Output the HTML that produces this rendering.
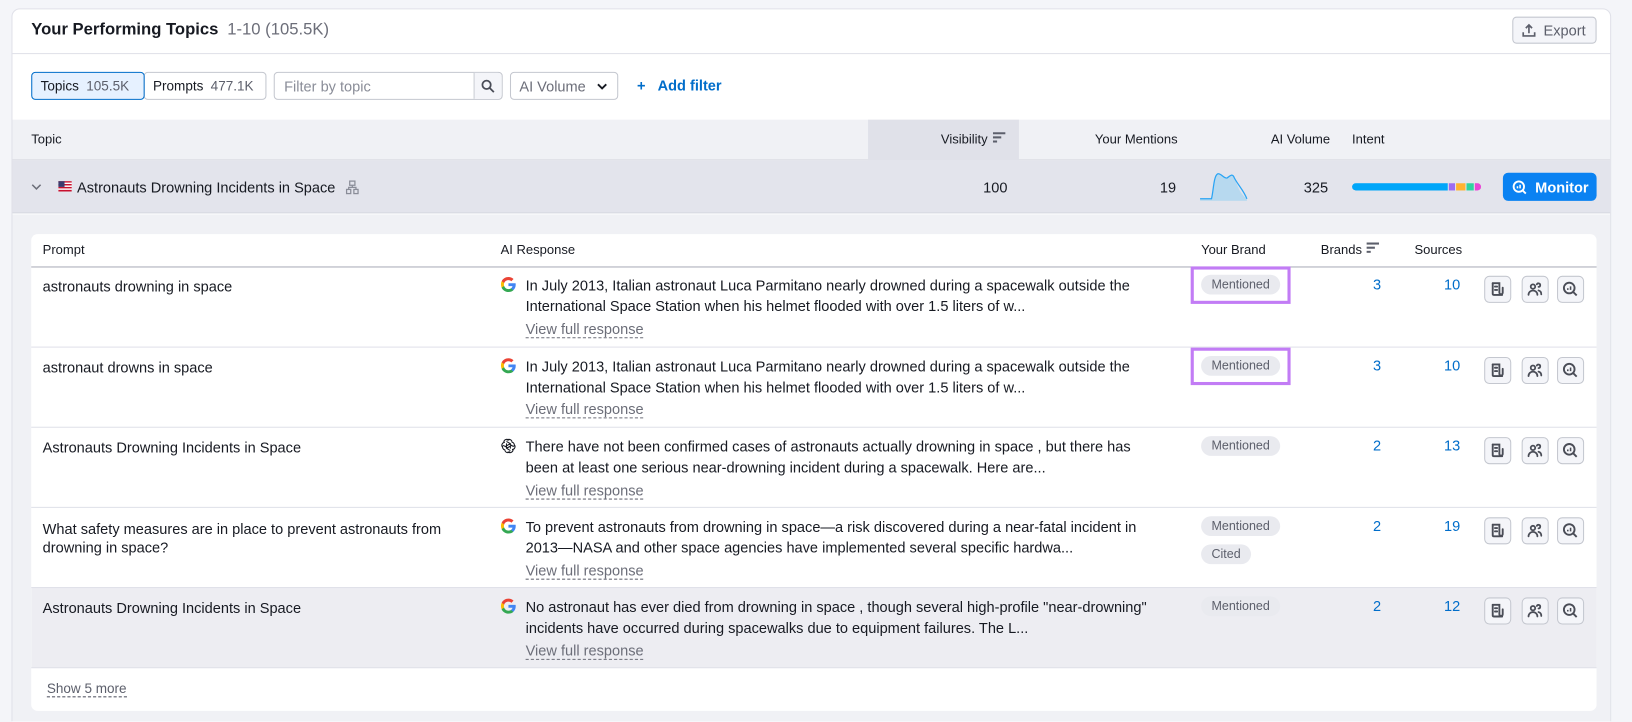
<!DOCTYPE html>
<html><head><meta charset="utf-8"><style>
*{box-sizing:border-box;margin:0;padding:0}
html,body{width:1632px;height:722px;overflow:hidden;background:#f4f5f9;font-family:"Liberation Sans",sans-serif;color:#171a22}
#root{position:absolute;left:0;top:0;width:1568px;height:693px;overflow:hidden;transform:scale(1.0408);transform-origin:0 0}
.a{position:absolute;white-space:nowrap}
.card{position:absolute;left:11px;top:8px;width:1537px;height:700px;background:#fff;border:1px solid #e0e1e9;border-radius:8px;overflow:hidden}
.btn{position:absolute;border:1px solid #c4c7cf;border-radius:4px;background:#fff;font-size:13px;display:flex;align-items:center}
.hdr{font-size:12.5px;color:#171a22}
.txt{font-size:14px}
.resp{font-size:14px;line-height:20px}
.badge{position:absolute;left:1154px;height:19px;line-height:19px;padding:0 10px;background:#e9eaef;border-radius:10px;font-size:12px;color:#5c5f6b}
.hl{position:absolute;left:1144px;width:96px;height:36px;border:3px solid #c27cf5}
.num{position:absolute;font-size:14px;color:#006dca;text-align:right;width:40px}
.ib{position:absolute;width:26px;height:26px;border:1px solid #c4c7cf;border-radius:5px;background:#f4f5f9;display:flex;align-items:center;justify-content:center}
.vfr{position:absolute;left:505px;font-size:14px;color:#6c6e79;border-bottom:1px dashed #6c6e79;line-height:15px}
</style></head><body><div id="root">
<div class="card"></div>
<div class="a" style="left:30px;top:20px;font-size:16px;font-weight:bold">Your Performing Topics <span style="font-weight:normal;color:#6c6e79;margin-left:4px">1-10 (105.5K)</span></div>
<div class="btn" style="left:1453px;top:16px;width:81px;height:26px;background:#f4f5f9;color:#5c5f6b;font-size:14px;padding-left:8px">
<svg width="14" height="14" viewBox="0 0 14 14" fill="none" stroke="#5c5f6b" stroke-width="1.6"><path d="M7 10V2M4 5l3-3 3 3M1.5 9v3.5h11V9"/></svg><span style="margin-left:7px">Export</span></div>
<div class="a" style="left:11px;top:51px;width:1537px;height:1px;background:#e0e1e9"></div>
<div class="btn" style="left:30px;top:69px;width:109px;height:27px;background:#e6f1ff;border-color:#006dca;padding-left:8px;z-index:2">Topics<span style="color:#5c5f6b;margin-left:7px">105.5K</span></div>
<div class="btn" style="left:138px;top:69px;width:118px;height:27px;padding-left:8px">Prompts<span style="color:#5c5f6b;margin-left:7px">477.1K</span></div>
<div class="btn" style="left:263px;top:69px;width:220px;height:27px;padding-left:9px;color:#8a8d98;font-size:14px">Filter by topic</div>
<div class="a" style="left:455px;top:70px;width:27px;height:25px;background:#f4f5f9;border-left:1px solid #c4c7cf;border-radius:0 4px 4px 0;display:flex;align-items:center;justify-content:center"><svg width="14" height="14" viewBox="0 0 14 14" fill="none" stroke="#4a4d57" stroke-width="1.7"><circle cx="5.5" cy="5.5" r="4"/><path d="M8.5 8.5l4 4"/></svg></div>
<div class="btn" style="left:490px;top:69px;width:104px;height:27px;padding-left:8px;color:#6c6e79;font-size:14px">AI Volume<svg style="margin-left:10px" width="11" height="8" viewBox="0 0 11 8" fill="none" stroke="#171a22" stroke-width="1.8"><path d="M1.5 2l4 4 4-4"/></svg></div>
<div class="a" style="left:612px;top:74px;font-size:14px;color:#006dca;font-weight:bold">+&nbsp;&nbsp;&nbsp;Add filter</div>
<div class="a" style="left:12px;top:115px;width:1535px;height:39px;background:#f0f1f5;border-bottom:1px solid #dcdde4"></div>
<div class="a" style="left:834px;top:115px;width:145px;height:39px;background:#e0e1e9"></div>
<div class="a hdr" style="left:30px;top:127px">Topic</div>
<div class="a hdr" style="left:904px;top:127px">Visibility</div>
<svg class="a" style="left:954px;top:127px" width="12" height="10" viewBox="0 0 12 10" fill="#5c5f6b"><rect y="0" width="12" height="2"/><rect y="4" width="8" height="2"/><rect y="8" width="4" height="2"/></svg>
<div class="a hdr" style="left:1052px;top:127px">Your Mentions</div>
<div class="a hdr" style="left:1221px;top:127px">AI Volume</div>
<div class="a hdr" style="left:1299px;top:127px">Intent</div>
<div class="a" style="left:12px;top:154px;width:1535px;height:51px;background:#e3e4ec;border-bottom:1px solid #d6d8e0"></div>
<svg class="a" style="left:30px;top:176px" width="10" height="7" viewBox="0 0 10 7" fill="none" stroke="#6c6e79" stroke-width="1.5"><path d="M1 1.5l4 4 4-4"/></svg>
<svg class="a" style="left:56px;top:174px" width="13" height="10" viewBox="0 0 13 10"><rect width="13" height="10" fill="#fff"/><rect y="0" width="13" height="1.4" fill="#c8102e"/><rect y="2.8" width="13" height="1.4" fill="#c8102e"/><rect y="5.6" width="13" height="1.4" fill="#c8102e"/><rect y="8.4" width="13" height="1.6" fill="#c8102e"/><rect width="6" height="5.6" fill="#3c3b6e"/></svg>
<div class="a txt" style="left:74px;top:172px">Astronauts Drowning Incidents in Space</div>
<svg class="a" style="left:332px;top:173px" width="13" height="14" viewBox="0 0 13 14" fill="none" stroke="#8a8d98" stroke-width="1.2"><rect x="4" y="1" width="5" height="4"/><rect x="1" y="9" width="4" height="4"/><rect x="8" y="9" width="4" height="4"/><path d="M6.5 5v2M3 9V7h7v2"/></svg>
<div class="a txt" style="left:928px;top:172px;width:40px;text-align:right">100</div>
<div class="a txt" style="left:1090px;top:172px;width:40px;text-align:right">19</div>
<svg class="a" style="left:1153px;top:163px" width="46" height="30" viewBox="0 0 46 30"><path d="M0 28H11C13 20 13 6 17 4 20 3 23 9 26 8 29 6 31 3 33 8 36 14 37 22 45 28V30H0Z" fill="#b7d9ef"/><path d="M0 28H11C13 20 13 6 17 4 20 3 23 9 26 8 29 6 31 3 33 8 36 14 42 20 45 28" fill="none" stroke="#2aa4f4" stroke-width="1.2"/></svg>
<div class="a txt" style="left:1236px;top:172px;width:40px;text-align:right">325</div>
<div class="a" style="left:1299px;top:176px;height:7px;width:125px;display:flex;border-radius:4px;overflow:hidden">
<div style="width:92px;background:#00a6f9;border-radius:4px 0 0 4px"></div><div style="width:1px"></div><div style="width:6px;background:#9d6cf2"></div><div style="width:1px"></div><div style="width:9px;background:#ffb331"></div><div style="width:1px"></div><div style="width:7px;background:#2fd39f"></div><div style="width:1px"></div><div style="width:6px;background:#e847d5;border-radius:0 4px 4px 0"></div></div>
<div class="a" style="left:1444px;top:166px;width:90px;height:27px;background:#0a82f2;border-radius:5px;color:#fff;font-size:14px;font-weight:bold;display:flex;align-items:center;padding-left:9px">
<svg width="14" height="14" viewBox="0 0 14 14" fill="none" stroke="#fff" stroke-width="1.8"><circle cx="6.3" cy="6.3" r="5"/><path d="M10 10l3 3"/><path d="M5 8V6M7.5 8V4.5" stroke-width="1.5"/></svg><span style="margin-left:8px">Monitor</span></div>
<div class="a" style="left:12px;top:206px;width:1535px;height:487px;background:#f0f1f5"></div>
<div class="a" style="left:30px;top:225px;width:1504px;height:458px;background:#fff;border-radius:6px;overflow:hidden">
<div class="a" style="left:0;top:340px;width:1504px;height:77px;background:#ededf2"></div>
</div>
<div class="a" style="left:30px;top:256px;width:1504px;height:1px;background:#a9acb8"></div>
<div class="a" style="left:30px;top:333px;width:1504px;height:1px;background:#e0e1e9"></div>
<div class="a" style="left:30px;top:410px;width:1504px;height:1px;background:#e0e1e9"></div>
<div class="a" style="left:30px;top:487px;width:1504px;height:1px;background:#e0e1e9"></div>
<div class="a" style="left:30px;top:564px;width:1504px;height:1px;background:#e0e1e9"></div>
<div class="a" style="left:30px;top:641px;width:1504px;height:1px;background:#e0e1e9"></div>
<div class="a hdr" style="left:41px;top:233px">Prompt</div>
<div class="a hdr" style="left:481px;top:233px">AI Response</div>
<div class="a hdr" style="left:1154px;top:233px">Your Brand</div>
<div class="a hdr" style="left:1269px;top:233px">Brands</div>
<svg class="a" style="left:1313px;top:233px" width="12" height="10" viewBox="0 0 12 10" fill="#5c5f6b"><rect width="12" height="2"/><rect y="4" width="8" height="2"/><rect y="8" width="4" height="2"/></svg>
<div class="a hdr" style="left:1359px;top:233px">Sources</div>
<div class="a" style="left:45px;top:655px;font-size:13px;color:#5c5f6b;border-bottom:1px dashed #5c5f6b;line-height:14px">Show 5 more</div>

<svg width="0" height="0" style="position:absolute"><defs>
<g id="gg"><path d="M14.5 7.6c0-.5 0-1-.1-1.4H7.5v2.7h3.9c-.2.9-.7 1.6-1.4 2.1v1.8h2.3c1.4-1.3 2.2-3.1 2.2-5.2z" fill="#4285f4"/><path d="M7.5 14.6c1.9 0 3.6-.6 4.8-1.7L10 11.1c-.6.4-1.5.7-2.5.7-1.9 0-3.5-1.3-4.1-3H1v1.8c1.2 2.4 3.7 4 6.5 4z" fill="#34a853"/><path d="M3.4 8.7c-.3-.9-.3-1.9 0-2.8V4.1H1c-.9 1.9-.9 4.2 0 6.3z" fill="#fbbc05"/><path d="M7.5 3.1c1.1 0 2 .4 2.8 1.1l2.1-2.1C11.1.9 9.4.2 7.5.2 4.7.2 2.2 1.8 1 4.1l2.4 1.8c.6-1.7 2.2-2.8 4.1-2.8z" fill="#ea4335"/></g>
<g id="i1" fill="none" stroke="#4a4d57" stroke-width="1.7" stroke-linecap="round"><path d="M3 2h6v8.5a1.5 1.5 0 0 0 3 0V6"/><path d="M3 2v9.5a1 1 0 0 0 1 1h7.5"/><path d="M5 5h2M5 8h2"/></g>
<g id="i2" fill="none" stroke="#4a4d57" stroke-width="1.6" stroke-linecap="round"><circle cx="5.5" cy="5" r="2"/><path d="M1.5 12.5c0-2.5 2-4 4-4s4 1.5 4 4"/><path d="M9 3a1.6 1.6 0 1 1 1.5 2.3M10.5 8.5c1.5.4 2.5 1.8 2.5 3.5"/></g>
<g id="i3" fill="none" stroke="#4a4d57" stroke-width="1.7"><circle cx="6.3" cy="6.3" r="4.8"/><path d="M10 10l3 3"/><path d="M5 8V6.5M7.5 8V4.8" stroke-width="1.4"/></g>
</defs></svg>

<div class="a txt" style="left:41px;top:267px">astronauts drowning in space</div>
<svg class="a" style="left:481px;top:266px" width="15" height="15" viewBox="0 0 15 15"><use href="#gg"/></svg>
<div class="a resp" style="left:505px;top:264px">In July 2013, Italian astronaut Luca Parmitano nearly drowned during a spacewalk outside the<br>International Space Station when his helmet flooded with over 1.5 liters of w...</div>
<div class="vfr" style="top:309px">View full response</div>
<div class="badge" style="top:264px">Mentioned</div>
<div class="hl" style="top:256px"></div>
<div class="num" style="left:1287px;top:265px">3</div>
<div class="num" style="left:1363px;top:265px">10</div>
<div class="ib" style="left:1426px;top:265px"><svg width="16" height="16" viewBox="0 0 15 15"><use href="#i1"/></svg></div>
<div class="ib" style="left:1462px;top:265px"><svg width="16" height="16" viewBox="0 0 15 15"><use href="#i2"/></svg></div>
<div class="ib" style="left:1496px;top:265px"><svg width="16" height="16" viewBox="0 0 15 15"><use href="#i3"/></svg></div>

<div class="a txt" style="left:41px;top:345px">astronaut drowns in space</div>
<svg class="a" style="left:481px;top:344px" width="15" height="15" viewBox="0 0 15 15"><use href="#gg"/></svg>
<div class="a resp" style="left:505px;top:342px">In July 2013, Italian astronaut Luca Parmitano nearly drowned during a spacewalk outside the<br>International Space Station when his helmet flooded with over 1.5 liters of w...</div>
<div class="vfr" style="top:386px">View full response</div>
<div class="badge" style="top:342px">Mentioned</div>
<div class="hl" style="top:334px"></div>
<div class="num" style="left:1287px;top:343px">3</div>
<div class="num" style="left:1363px;top:343px">10</div>
<div class="ib" style="left:1426px;top:343px"><svg width="16" height="16" viewBox="0 0 15 15"><use href="#i1"/></svg></div>
<div class="ib" style="left:1462px;top:343px"><svg width="16" height="16" viewBox="0 0 15 15"><use href="#i2"/></svg></div>
<div class="ib" style="left:1496px;top:343px"><svg width="16" height="16" viewBox="0 0 15 15"><use href="#i3"/></svg></div>

<div class="a txt" style="left:41px;top:422px">Astronauts Drowning Incidents in Space</div>
<svg class="a" style="left:481px;top:421px" width="15" height="15" viewBox="0 0 24 24" fill="none" stroke="#171a22" stroke-width="1.6"><path d="M9.5 3.5a4.5 4.5 0 0 1 8 2.5 4.5 4.5 0 0 1 3 6.5M21 10a4.5 4.5 0 0 1-3.5 7.5M19 17a4.5 4.5 0 0 1-8 3.5M14.5 20.5a4.5 4.5 0 0 1-8-2.5 4.5 4.5 0 0 1-3-6.5M3 14a4.5 4.5 0 0 1 3.5-7.5M5 7a4.5 4.5 0 0 1 8-3.5M9 8v7.5l6 3.5M15 16V8.5L9 5M7 13l6.5-3.8 6.5 3.8M17 11l-6.5 3.8L4 11"/></svg>
<div class="a resp" style="left:505px;top:419px">There have not been confirmed cases of astronauts actually drowning in space , but there has<br>been at least one serious near-drowning incident during a spacewalk. Here are...</div>
<div class="vfr" style="top:464px">View full response</div>
<div class="badge" style="top:419px">Mentioned</div>
<div class="num" style="left:1287px;top:420px">2</div>
<div class="num" style="left:1363px;top:420px">13</div>
<div class="ib" style="left:1426px;top:420px"><svg width="16" height="16" viewBox="0 0 15 15"><use href="#i1"/></svg></div>
<div class="ib" style="left:1462px;top:420px"><svg width="16" height="16" viewBox="0 0 15 15"><use href="#i2"/></svg></div>
<div class="ib" style="left:1496px;top:420px"><svg width="16" height="16" viewBox="0 0 15 15"><use href="#i3"/></svg></div>

<div class="a txt" style="left:41px;top:499px;line-height:18px">What safety measures are in place to prevent astronauts from<br>drowning in space?</div>
<svg class="a" style="left:481px;top:498px" width="15" height="15" viewBox="0 0 15 15"><use href="#gg"/></svg>
<div class="a resp" style="left:505px;top:496px">To prevent astronauts from drowning in space—a risk discovered during a near-fatal incident in<br>2013—NASA and other space agencies have implemented several specific hardwa...</div>
<div class="vfr" style="top:541px">View full response</div>
<div class="badge" style="top:496px">Mentioned</div>
<div class="badge" style="top:523px">Cited</div>
<div class="num" style="left:1287px;top:497px">2</div>
<div class="num" style="left:1363px;top:497px">19</div>
<div class="ib" style="left:1426px;top:497px"><svg width="16" height="16" viewBox="0 0 15 15"><use href="#i1"/></svg></div>
<div class="ib" style="left:1462px;top:497px"><svg width="16" height="16" viewBox="0 0 15 15"><use href="#i2"/></svg></div>
<div class="ib" style="left:1496px;top:497px"><svg width="16" height="16" viewBox="0 0 15 15"><use href="#i3"/></svg></div>

<div class="a txt" style="left:41px;top:576px">Astronauts Drowning Incidents in Space</div>
<svg class="a" style="left:481px;top:575px" width="15" height="15" viewBox="0 0 15 15"><use href="#gg"/></svg>
<div class="a resp" style="left:505px;top:573px">No astronaut has ever died from drowning in space , though several high-profile "near-drowning"<br>incidents have occurred during spacewalks due to equipment failures. The L...</div>
<div class="vfr" style="top:618px">View full response</div>
<div class="badge" style="top:573px">Mentioned</div>
<div class="num" style="left:1287px;top:574px">2</div>
<div class="num" style="left:1363px;top:574px">12</div>
<div class="ib" style="left:1426px;top:574px"><svg width="16" height="16" viewBox="0 0 15 15"><use href="#i1"/></svg></div>
<div class="ib" style="left:1462px;top:574px"><svg width="16" height="16" viewBox="0 0 15 15"><use href="#i2"/></svg></div>
<div class="ib" style="left:1496px;top:574px"><svg width="16" height="16" viewBox="0 0 15 15"><use href="#i3"/></svg></div>
</div></body></html>
